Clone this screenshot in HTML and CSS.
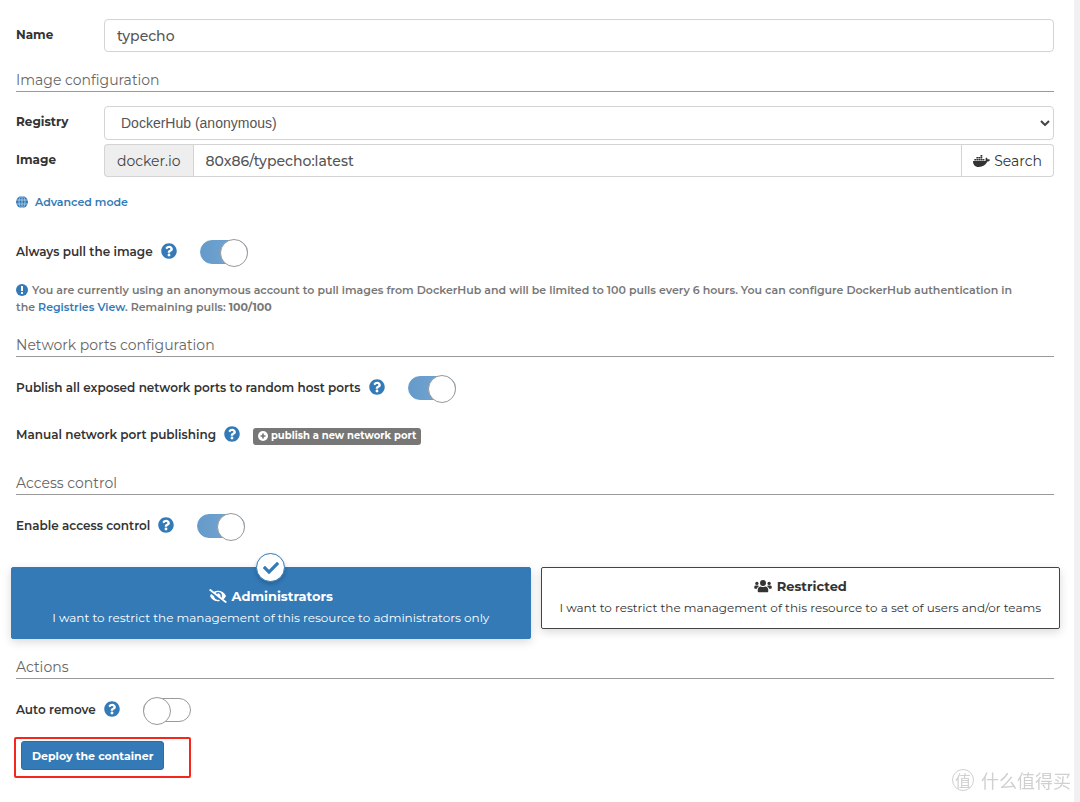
FILE: index.html
```html
<!DOCTYPE html>
<html lang="en">

<head>
    <meta charset="UTF-8">
    <meta name="viewport" content="width=device-width, initial-scale=1.0">
    <title>Create container</title>
    <link rel="stylesheet" href="styles.css">
</head>

<body>
    <!-- shared icons -->
    <svg class="sprite" aria-hidden="true">
        <symbol id="help" viewBox="0 0 512 512">
            <path d="M504 256c0 136.997-111.043 248-248 248S8 392.997 8 256C8 119.083 119.043 8 256 8s248 111.083 248 248zM262.655 90c-54.497 0-89.255 22.957-116.549 63.758-3.536 5.286-2.353 12.415 2.715 16.258l34.699 26.31c5.205 3.947 12.621 3.008 16.665-2.122 17.864-22.658 30.113-35.797 57.303-35.797 20.429 0 45.698 13.148 45.698 32.958 0 14.976-12.363 22.667-32.534 33.976C247.128 238.528 216 254.941 216 296v4c0 6.627 5.373 12 12 12h56c6.627 0 12-5.373 12-12v-1.333c0-28.462 83.186-29.647 83.186-106.667 0-58.002-60.165-102-116.531-102zM256 338c-25.365 0-46 20.635-46 46 0 25.364 20.635 46 46 46s46-20.636 46-46c0-25.365-20.635-46-46-46z" />
        </symbol>
    </svg>

    <form class="page">
        <div class="field">
            <label for="name">Name</label>
            <input class="control" type="text" id="name" value="typecho">
        </div>

        <h2 class="title">Image configuration</h2>
        <div class="field">
            <label for="registry">Registry</label>
            <div class="select">
                <select class="control" id="registry">
                    <option>DockerHub (anonymous)</option>
                </select>
                <svg class="chevron" viewBox="0 0 10 6"><path d="M1 1l4 4 4-4" /></svg>
            </div>
        </div>
        <div class="field">
            <label for="image">Image</label>
            <div class="group">
                <span class="addon">docker.io</span>
                <input class="control" type="text" id="image" value="80x86/typecho:latest">
                <button class="search" type="button">
                    <svg viewBox="0 0 640 512">
                        <path d="M349.9 236.3h-66.1v-59.4h66.1v59.4zm0-204.3h-66.1v60.7h66.1V32zm78.2 144.8H362v59.4h66.1v-59.4zm-156.3-72.1h-66.1v60.1h66.1v-60.1zm78.1 0h-66.1v60.1h66.1v-60.1zm276.8 100c-14.4-9.7-47.6-13.2-73.1-8.4-3.3-24-16.7-44.9-41.1-63.7l-14-9.3-9.3 14c-18.4 27.8-23.4 73.6-3.7 103.8-8.7 4.7-25.8 11.1-48.4 10.7H2.4c-8.7 50.8 5.8 116.8 44 162.1 37.1 43.9 92.7 66.2 165.4 66.2 157.4 0 273.9-72.5 328.4-204.2 21.4.4 67.6.1 91.3-45.2 1.5-2.5 6.6-13.2 8.5-17.1l-13.3-8.9zm-511.1-27.9h-66v59.4h66.1v-59.4zm78.1 0h-66.1v59.4h66.1v-59.4zm78.1 0h-66.1v59.4h66.1v-59.4zm-78.1-72.1h-66.1v60.1h66.1v-60.1z" />
                    </svg>
                    Search
                </button>
            </div>
        </div>
        <a class="mode" href="#">
            <svg class="small-icon" viewBox="0 0 24 24">
                <circle cx="12" cy="12" r="12" fill="#337ab7" />
                <path d="M12 0v24M0 8h24M0 16h24" stroke="#fff" fill="none" />
                <ellipse cx="12" cy="12" rx="6" ry="12" stroke="#fff" fill="none" />
            </svg>
            Advanced mode
        </a>
        <div class="row">
            <label for="pull">Always pull the image</label>
            <svg class="help"><use href="#help" /></svg>
            <input class="switch" type="checkbox" id="pull" checked>
        </div>
        <p class="notice">
            <svg class="small-icon" viewBox="0 0 12 12">
                <circle cx="6" cy="6" r="6" fill="#337ab7" />
                <path d="M5 2h2v5H5zM5 8h2v2H5z" fill="#fff" />
            </svg>
            You are currently using an anonymous account to pull images from DockerHub and will be limited to 100 pulls every 6 hours. You can configure DockerHub authentication in the <a href="#">Registries View</a>. Remaining pulls: <b>100/100</b>
        </p>

        <h2 class="title">Network ports configuration</h2>
        <div class="row">
            <label for="ports">Publish all exposed network ports to random host ports</label>
            <svg class="help"><use href="#help" /></svg>
            <input class="switch" type="checkbox" id="ports" checked>
        </div>
        <div class="row manual">
            <span>Manual network port publishing</span>
            <svg class="help"><use href="#help" /></svg>
            <button class="publish" type="button">
                <svg viewBox="0 0 12 12">
                    <circle cx="6" cy="6" r="6" />
                    <path d="M6 3v6M3 6h6" />
                </svg>
                publish a new network port
            </button>
        </div>

        <h2 class="title">Access control</h2>
        <div class="row">
            <label for="access">Enable access control</label>
            <svg class="help"><use href="#help" /></svg>
            <input class="switch" type="checkbox" id="access" checked>
        </div>
        <div class="cards">
            <input type="radio" name="owner" id="admins" checked>
            <label class="card" for="admins">
                <span class="badge">
                    <svg viewBox="0 0 512 512">
                        <path d="M173.898 439.404l-166.4-166.4c-9.997-9.997-9.997-26.206 0-36.204l36.203-36.204c9.997-9.998 26.207-9.998 36.204 0L192 312.69 432.095 72.596c9.997-9.997 26.207-9.997 36.204 0l36.203 36.204c9.997 9.997 9.997 26.206 0 36.204l-294.4 294.401c-9.998 9.997-26.207 9.997-36.204-.001z" />
                    </svg>
                </span>
                <span class="card-title">
                    <svg viewBox="0 0 640 512">
                        <path d="M320 400c-75.85 0-137.25-58.71-142.9-133.11L72.2 185.82c-13.79 17.3-26.48 35.59-36.72 55.59a32.35 32.35 0 0 0 0 29.19C89.71 376.41 197.07 448 320 448c26.91 0 52.87-4 77.89-10.46L346 397.39a144.13 144.13 0 0 1-26 2.61zm313.82 58.1l-110.55-85.44a331.25 331.25 0 0 0 81.25-102.07 32.35 32.35 0 0 0 0-29.19C550.29 135.59 442.93 64 320 64a308.15 308.15 0 0 0-147.32 37.7L45.46 3.37A16 16 0 0 0 23 6.18L3.37 31.45A16 16 0 0 0 6.18 53.9l588.36 454.73a16 16 0 0 0 22.46-2.81l19.64-25.27a16 16 0 0 0-2.82-22.45zM450.1 316.63l-39.34-30.41A94.75 94.75 0 0 0 416 256a94.76 94.76 0 0 0-121.31-92.21A47.65 47.65 0 0 1 304 192a46.64 46.64 0 0 1-1.54 10l-73.69-56.95A142.31 142.31 0 0 1 320 112a143.92 143.92 0 0 1 144 144c0 21.63-5.29 41.79-13.9 60.63z" />
                    </svg>
                    Administrators
                </span>
                <span>I want to restrict the management of this resource to administrators only</span>
            </label>
            <input type="radio" name="owner" id="restricted">
            <label class="card" for="restricted">
                <span class="card-title">
                    <svg viewBox="0 0 640 512">
                        <circle cx="320" cy="144" r="108" />
                        <path d="M128 448v-48c0-74 50-126 112-126 48 28 112 28 160 0 62 0 112 52 112 126v48q0 32-32 32H160q-32 0-32-32z" />
                        <circle cx="96" cy="160" r="60" />
                        <circle cx="544" cy="160" r="60" />
                        <path d="M0 320v-30q0-50 54-50h80q28 0 44 18-70 36-80 94H32q-32 0-32-32zM640 320v-30q0-50-54-50h-80q-28 0-44 18 70 36 80 94h66q32 0 32-32z" />
                    </svg>
                    Restricted
                </span>
                <span>I want to restrict the management of this resource to a set of users and/or teams</span>
            </label>
        </div>

        <h2 class="title">Actions</h2>
        <div class="row">
            <label for="remove">Auto remove</label>
            <svg class="help"><use href="#help" /></svg>
            <input class="switch" type="checkbox" id="remove">
        </div>
        <div class="highlight">
            <button class="deploy" type="button">Deploy the container</button>
        </div>
    </form>

    <div class="watermark"><span class="seal">值</span>什么值得买</div>
</body>

</html>
```

FILE: styles.css
```css
* {
    box-sizing: border-box;
}

body {
    margin: 0;
    background: #f1f1f1;
    color: #333;
    font: 12px/20px Montserrat, Inter, sans-serif;
}

a {
    color: #337ab7;
    text-decoration: none;
}

button,
input {
    font: inherit;
}

.sprite {
    display: none;
}

.page {
    min-height: 100vh;
    margin-right: 6px;
    padding: 19px 20px 22px 16px;
    background: #fff;
}

/* labelled text fields */
.field {
    display: grid;
    grid-template-columns: 88px 1fr;
    margin-bottom: 4px;
}

.field > label {
    padding-top: 6px;
    font-weight: 700;
}

.control {
    width: 100%;
    height: 33px;
    padding: 0 12px;
    border: 1px solid #d4d4d4;
    border-radius: 4px;
    background: #fff;
    color: #555;
    font-size: 14px;
    font-weight: 500;
}

.select {
    position: relative;
}

.select .control {
    display: block;
    height: 34px;
    appearance: none;
    padding-left: 16px;
    font-family: "Liberation Sans", sans-serif;
    font-weight: 400;
}

.chevron {
    position: absolute;
    right: 4px;
    top: 14px;
    width: 10px;
    height: 6px;
    fill: none;
    stroke: #444;
    stroke-width: 2;
    pointer-events: none;
}

.group {
    display: flex;
    height: 33px;
}

.group .control {
    flex: 1;
    border-radius: 0;
}

.addon,
.search {
    display: flex;
    align-items: center;
    padding: 0 12px;
    border: 1px solid #d4d4d4;
    font-size: 14px;
}

.addon {
    border-right: 0;
    border-radius: 4px 0 0 4px;
    background: #eee;
    color: #444;
}

.search {
    gap: 4px;
    padding: 0 11px;
    border-left: 0;
    border-radius: 0 4px 4px 0;
    background: #fff;
    color: #333;
}

.search svg {
    width: 17px;
    height: 14px;
    fill: #333;
}

.title {
    margin: 18px 0 14px;
    padding-bottom: 1px;
    border-bottom: 1px solid #999;
    color: #666;
    font-size: 14px;
    font-weight: 400;
    line-height: 20px;
}

.small-icon {
    width: 12px;
    height: 12px;
}

.mode {
    display: flex;
    align-items: center;
    gap: 7px;
    margin: 15px 0 23px;
    font-size: 11px;
    font-weight: 600;
}

/* rows with a help icon and a switch */
.row {
    display: flex;
    align-items: center;
    min-height: 34px;
    font-weight: 600;
}

.help {
    width: 16px;
    height: 16px;
    margin: 0 23px 3px 8px;
    fill: #337ab7;
}

.manual {
    margin: 13px 0 21px;
}

.manual .help {
    margin-right: 13px;
}

.switch {
    position: relative;
    width: 48px;
    height: 24px;
    margin: 0;
    appearance: none;
    border: 1px solid #999;
    border-radius: 12px;
    background: #fff;
}

.switch::before {
    content: "";
    position: absolute;
    top: -2px;
    left: -1px;
    width: 26px;
    height: 26px;
    border: 1px solid #999;
    border-radius: 50%;
    background: #fff;
}

.switch:checked {
    border-color: #6a9fcd;
    background: linear-gradient(90deg, #649aca, #7ba9d2);
}

.switch:checked::before {
    left: auto;
    right: -1px;
}

.notice {
    margin: 13px 0 19px;
    padding-right: 24px;
    color: #777;
    font-size: 11px;
    font-weight: 600;
    line-height: 17px;
}

.notice b {
    font-weight: 700;
}

.notice .small-icon {
    margin-right: 1px;
    vertical-align: -2px;
}

.publish {
    display: flex;
    align-items: center;
    gap: 3px;
    height: 17px;
    margin-top: 2px;
    padding: 0 5px;
    border: 0;
    border-radius: 3px;
    background: #777;
    color: #fff;
    font-size: 10px;
    font-weight: 700;
}

.publish svg {
    width: 10px;
    height: 10px;
    fill: #fff;
    stroke: #777;
    stroke-width: 2;
}

.publish circle {
    stroke: none;
}

/* ownership choice */
.cards {
    display: flex;
    align-items: flex-start;
    gap: 10px;
    margin: 24px -6px 17px -5px;
}

.cards input {
    position: absolute;
    opacity: 0;
}

.card {
    position: relative;
    flex: 1;
    display: flex;
    flex-direction: column;
    align-items: center;
    padding: 7px 12px 9px;
    border: 1px solid #444;
    border-radius: 2px;
    box-shadow: 0 3px 10px rgba(0, 0, 0, .15);
    font-weight: 400;
    line-height: 22px;
    cursor: pointer;
}

.cards input:checked + .card {
    padding-top: 17px;
    border-color: #337ab7;
    background: #337ab7;
    color: #fff;
}

.card-title {
    display: flex;
    align-items: center;
    gap: 5px;
    font-size: 13px;
    font-weight: 700;
}

.card-title svg {
    width: 18px;
    height: 14px;
    fill: currentColor;
}

.badge {
    position: absolute;
    top: -15px;
    display: flex;
    align-items: center;
    justify-content: center;
    width: 29px;
    height: 29px;
    border: 1px solid #337ab7;
    border-radius: 50%;
    background: #fff;
    box-shadow: 0 2px 4px rgba(0, 0, 0, .2);
}

.badge svg {
    width: 16px;
    height: 16px;
    fill: #337ab7;
}

.highlight {
    width: 177px;
    margin: 10px 0 0 -2px;
    padding: 2px 5px 6px;
    border: 2px solid #f5261c;
    border-radius: 2px;
}

.deploy {
    display: block;
    height: 29px;
    padding: 0 10px;
    border: 1px solid #2e6da4;
    border-radius: 3px;
    background: #337ab7;
    color: #fff;
    font-size: 11px;
    font-weight: 700;
}

.watermark {
    position: fixed;
    right: 9px;
    bottom: 10px;
    display: flex;
    align-items: center;
    gap: 7px;
    color: #d0d0d0;
    font: 18px/24px "Noto Sans CJK SC", sans-serif;
}

.seal {
    width: 22px;
    height: 22px;
    border: 1px solid #d0d0d0;
    border-radius: 50%;
    font-size: 16px;
    line-height: 20px;
    text-align: center;
}
```
